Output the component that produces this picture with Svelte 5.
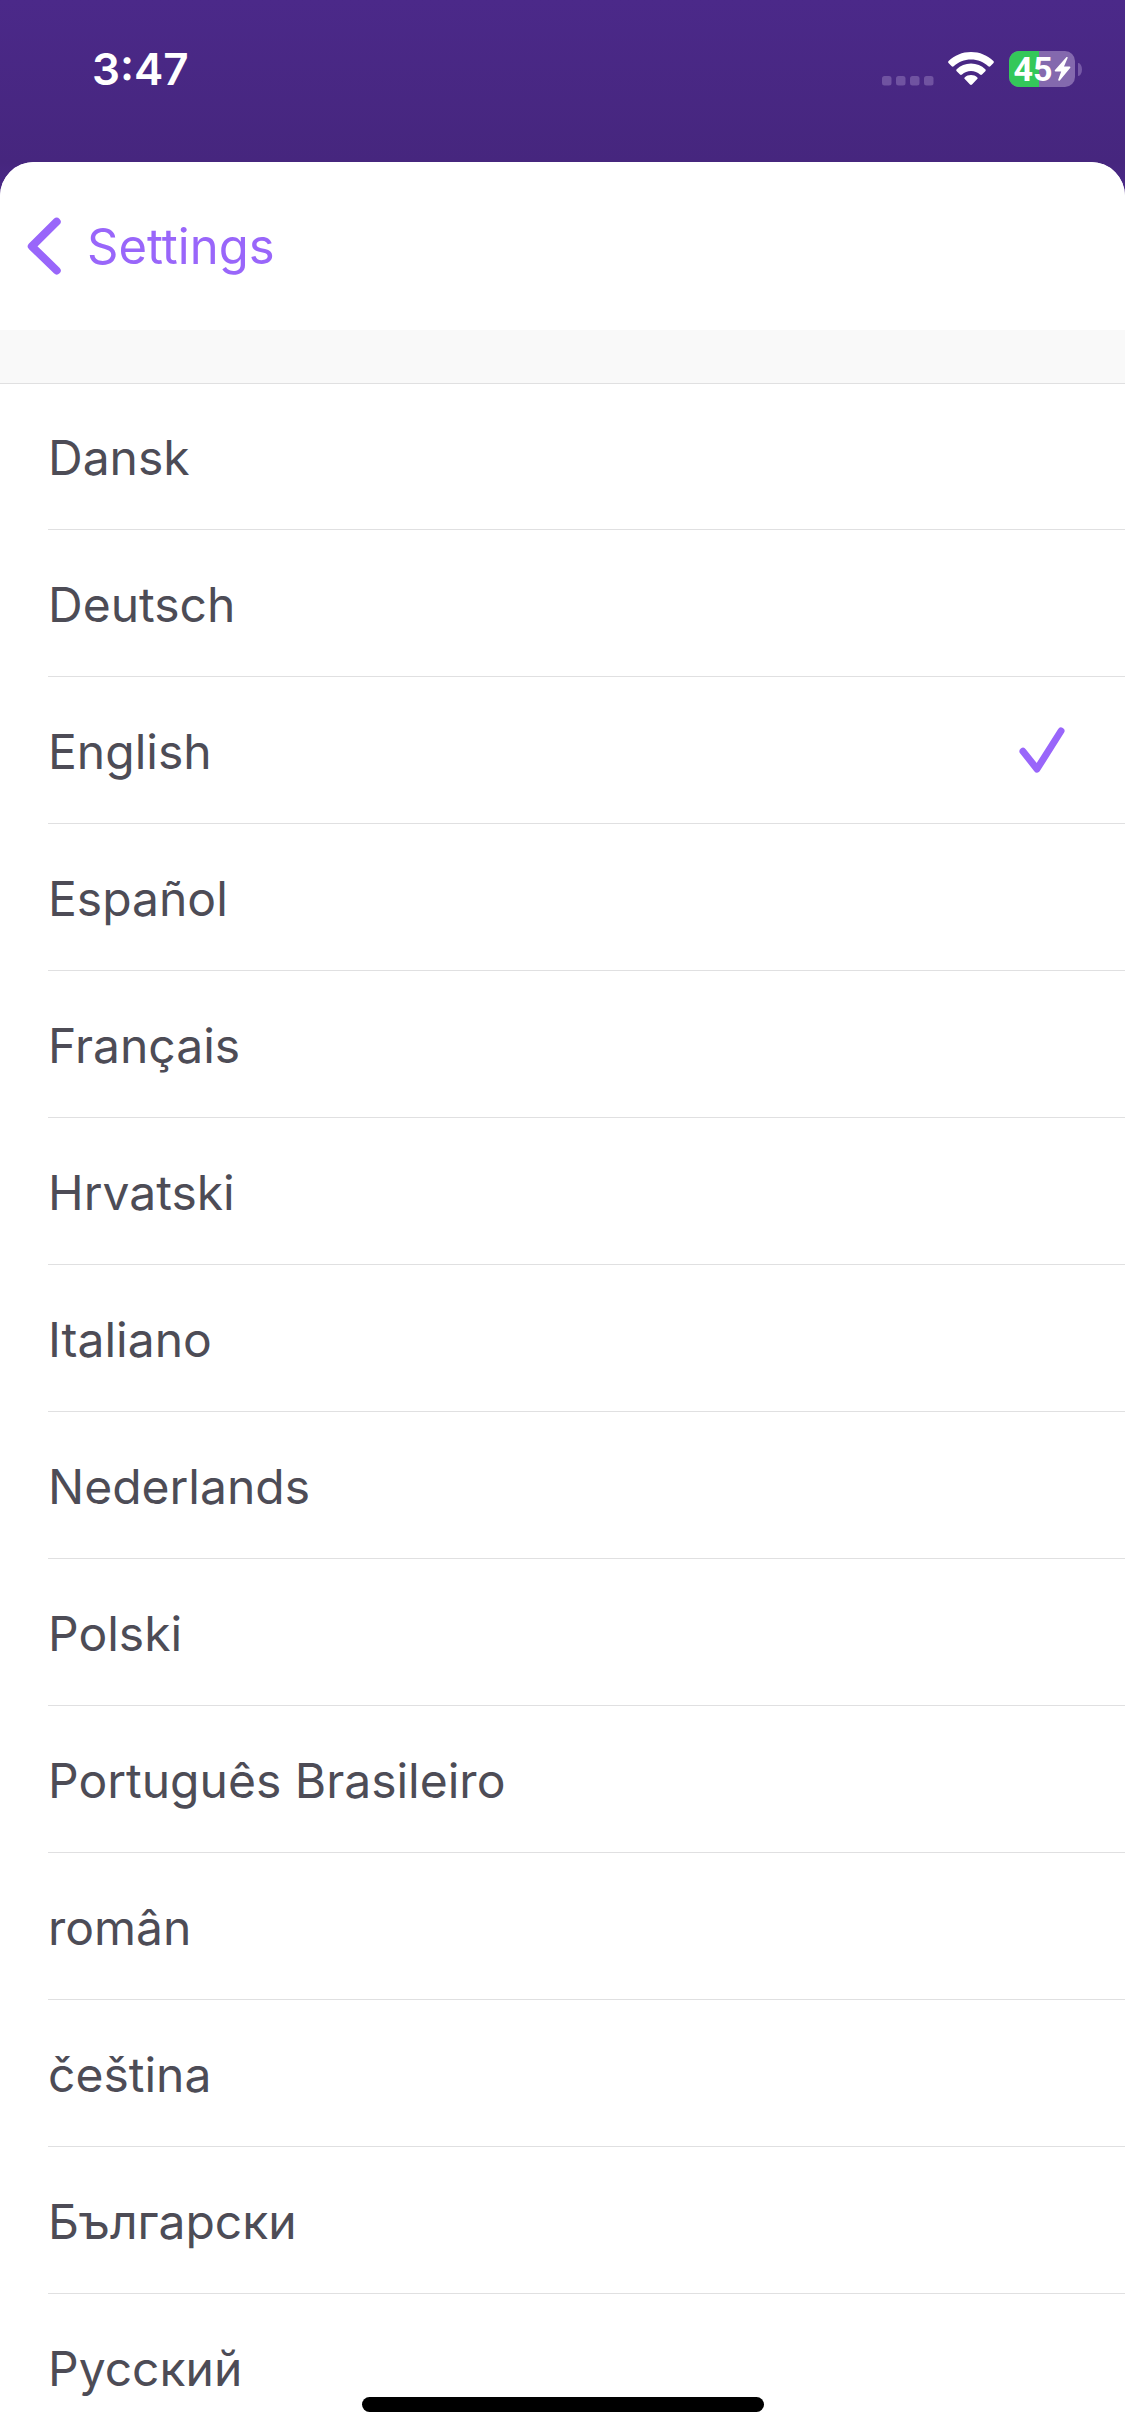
<script lang="ts">
    const languages = [
        {code: 'da', name: 'Dansk'},
        {code: 'de', name: 'Deutsch'},
        {code: 'en', name: 'English'},
        {code: 'es', name: 'Español'},
        {code: 'fr', name: 'Français'},
        {code: 'hr', name: 'Hrvatski'},
        {code: 'it', name: 'Italiano'},
        {code: 'nl', name: 'Nederlands'},
        {code: 'pl', name: 'Polski'},
        {code: 'pt-BR', name: 'Português Brasileiro'},
        {code: 'ro', name: 'român'},
        {code: 'cs', name: 'čeština'},
        {code: 'bg', name: 'Български'},
        {code: 'ru', name: 'Русский'},
    ];

    let selected = $state('en');
    let battery = $state(45);
</script>

<div class="screen">
    <header class="status-bar">
        <span class="time">3:47</span>
        <div class="indicators">
            <svg class="signal" viewBox="0 0 52 10" aria-hidden="true">
                <rect x="0" y="0" width="9.5" height="9.5" rx="2.5" />
                <rect x="14" y="0" width="9.5" height="9.5" rx="2.5" />
                <rect x="28" y="0" width="9.5" height="9.5" rx="2.5" />
                <rect x="42" y="0" width="9.5" height="9.5" rx="2.5" />
            </svg>
            <svg class="wifi" viewBox="0 0 46 34" aria-hidden="true">
                <path d="M23 0C31.700 0 39.600 3.400 45.400 8.900C46 9.500 46 10.300 45.500 10.900L42.300 14.200C41.700 14.800 40.900 14.800 40.300 14.200C35.800 10 29.700 7.400 23 7.400C16.300 7.400 10.200 10 5.700 14.200C5.100 14.800 4.300 14.800 3.700 14.200L0.500 10.900C0 10.300 0 9.500 0.600 8.900C6.400 3.400 14.300 0 23 0Z" />
                <path d="M23 11.500C28.600 11.500 33.600 13.700 37.300 17.200C37.900 17.800 37.900 18.600 37.300 19.200L34 22.500C33.400 23.100 32.700 23.100 32 22.500C29.600 20.300 26.500 18.900 23 18.900C19.500 18.900 16.400 20.300 14 22.500C13.300 23.100 12.600 23.100 12 22.500L8.700 19.200C8.100 18.600 8.100 17.800 8.700 17.200C12.400 13.700 17.400 11.500 23 11.500Z" />
                <path d="M23 23C25.600 23 27.500 23.900 29.100 25.200C29.800 25.800 29.800 26.500 29.200 27.100L24 32.500C23.400 33.100 22.600 33.100 22 32.500L16.800 27.100C16.200 26.500 16.200 25.800 16.900 25.200C18.500 23.900 20.400 23 23 23Z" />
            </svg>
            <div class="battery">
                <div class="battery-body">
                    <div class="battery-level" style="width: {battery}%"></div>
                    <span class="battery-text">{battery}</span>
                    <svg class="bolt" viewBox="0 0 17 24" aria-hidden="true">
                        <path d="M12.300 0.300L1 13C0.400 13.800 0.700 14.400 1.600 14.400H7.200L4.300 22.600C3.900 23.800 5 24.300 5.800 23.400L16.100 10.900C16.700 10.100 16.400 9.500 15.500 9.500H10L13.600 1.100C14 0.100 13 -0.400 12.300 0.300Z" />
                    </svg>
                </div>
                <div class="battery-cap"></div>
            </div>
        </div>
    </header>

    <main class="sheet">
        <nav>
            <a href="#settings" class="back">
                <svg class="chevron" viewBox="0 0 34 58" aria-hidden="true">
                    <path d="M29.700 4.700L4.800 29.300L29.700 53.500" />
                </svg>
                Settings
            </a>
        </nav>

        <div class="languages" role="radiogroup" aria-label="Language">
            {#each languages as language}
                <label class="row">
                    <input type="radio" name="language" value={language.code} bind:group={selected} />
                    <span class="content">
                        <span class="name" lang={language.code}>{language.name}</span>
                        {#if selected === language.code}
                            <svg class="check" viewBox="0 0 46 46" aria-hidden="true">
                                <path d="M4 24.300L18 42L42 4" />
                            </svg>
                        {/if}
                    </span>
                </label>
            {/each}
        </div>
    </main>

    <div class="home-indicator"></div>
</div>

<style>
    :global(body) {
        margin: 0;
    }

    .screen {
        --accent: #9966fa;
        --line: #e0e0e1;
        position: relative;
        display: flex;
        flex-direction: column;
        height: 100vh;
        overflow: hidden;
        font-family: Inter, "Liberation Sans", sans-serif;
        color: #4d4c56;
        background: linear-gradient(#4b2989, #46267e 162px, #4a2887 190px);
    }

    .status-bar {
        display: flex;
        flex: none;
        justify-content: space-between;
        align-items: center;
        box-sizing: border-box;
        height: 162px;
        padding: 0 43px 24px 92px;
        color: #fff;
    }

    .time {
        font-size: 44px;
        font-weight: 600;
    }

    .indicators {
        display: flex;
        align-items: center;
    }

    .signal {
        width: 52px;
        height: 10px;
        margin: 23px 14px 0 0;
        fill: #7053a1;
    }

    .wifi {
        width: 46px;
        height: 34px;
        margin-right: 15px;
        fill: #fff;
    }

    .battery {
        display: flex;
        align-items: center;
        gap: 3px;
    }

    .battery-body {
        position: relative;
        display: flex;
        align-items: center;
        justify-content: center;
        width: 66px;
        height: 36px;
        border-radius: 10px;
        background: #8469ae;
    }

    .battery-level {
        position: absolute;
        inset: 0 auto 0 0;
        border-radius: 10px 0 0 10px;
        background: #34c85a;
    }

    .battery-text {
        position: relative;
        font-size: 34px;
        font-weight: 700;
        line-height: 36px;
        font-family: Roboto, "Liberation Sans", sans-serif;
    }

    .bolt {
        position: relative;
        width: 17px;
        height: 24px;
        margin-left: 1px;
        fill: #fff;
    }

    .battery-cap {
        width: 4px;
        height: 13px;
        border-radius: 0 4px 4px 0 / 0 7px 7px 0;
        background: #7659a6;
    }

    .sheet {
        display: flex;
        flex: 1;
        flex-direction: column;
        min-height: 0;
        border-radius: 34px 34px 0 0;
        overflow: hidden;
        background: #f9f9f9;
    }

    nav {
        display: flex;
        flex: none;
        align-items: center;
        height: 168px;
        padding: 0 27px;
        background: #fff;
    }

    .back {
        display: flex;
        align-items: center;
        gap: 26px;
        font-size: 49px;
        text-decoration: none;
        color: var(--accent);
    }

    .chevron {
        width: 34px;
        height: 58px;
        fill: none;
        stroke: currentColor;
        stroke-width: 8;
        stroke-linecap: round;
        stroke-linejoin: round;
    }

    .languages {
        flex: 1;
        min-height: 0;
        margin-top: 53px;
        overflow-y: auto;
        scrollbar-width: none;
        background: #fff;
        box-shadow: inset 0 1px var(--line);
    }

    .row {
        display: block;
        padding-left: 48px;
        cursor: pointer;
    }

    .row input {
        position: absolute;
        appearance: none;
        margin: 0;
    }

    .content {
        display: flex;
        justify-content: space-between;
        align-items: center;
        box-sizing: border-box;
        height: 147px;
        padding-right: 60px;
        border-bottom: 1px solid var(--line);
        font-size: 48px;
    }

    .name {
        padding-top: 3px;
    }

    .check {
        width: 46px;
        height: 46px;
        fill: none;
        stroke: var(--accent);
        stroke-width: 7;
        stroke-linecap: round;
        stroke-linejoin: round;
    }

    .home-indicator {
        position: absolute;
        bottom: 24px;
        left: 50%;
        width: 402px;
        height: 15px;
        border-radius: 8px;
        background: #000;
        transform: translateX(-50%);
    }
</style>
